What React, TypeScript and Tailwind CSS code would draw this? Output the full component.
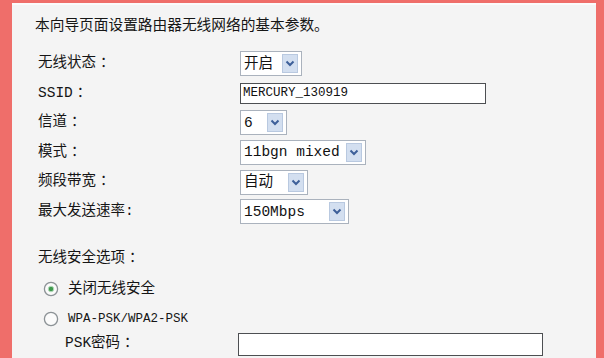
import React from "react";

const FONT = "font-['Liberation_Mono','Noto_Sans_CJK_SC',monospace]";

function Chevron() {
  return (
    <span className="flex h-[19px] w-[16px] items-center justify-center border border-[#b9c9e0] bg-[#d3dff0]">
      <svg width="10" height="7" viewBox="0 0 10 7">
        <path d="M1.5 1.5 L5 5 L8.5 1.5" fill="none" stroke="#3d5f99" strokeWidth="2" />
      </svg>
    </span>
  );
}

function Select({ value, width }: { value: string; width: string }) {
  return (
    <div
      className={`flex h-[25px] items-center justify-between border border-[#aab2bd] bg-white pl-[3px] pr-[3px] ${width}`}
    >
      <span className="text-[14.5px] leading-none text-[#111]">{value}</span>
      <Chevron />
    </div>
  );
}

function Radio({ checked }: { checked?: boolean }) {
  return (
    <svg width="16" height="16" viewBox="0 0 16 16">
      <circle cx="8" cy="8" r="6.6" fill="#fbfbfb" stroke="#8c9296" strokeWidth="1.3" />
      {checked && <circle cx="8" cy="8" r="2.8" fill="#3f9a4e" stroke="#b9dcbf" strokeWidth="1" />}
    </svg>
  );
}

function Label({ text, colon = "：" }: { text: string; colon?: string }) {
  return (
    <span className="text-[14.5px]">
      {text}
      <span className="pl-[4px]">{colon}</span>
    </span>
  );
}

const rows: { key: string; label: React.ReactNode; control: React.ReactNode }[] = [
  { key: "state", label: <Label text="无线状态" />, control: <Select value="开启" width="w-[62px]" /> },
  {
    key: "ssid",
    label: <Label text="SSID" />,
    control: (
      <div className="flex h-[21px] w-[246px] items-center border border-[#4d4f52] bg-white pl-[2px] text-[12.5px] text-[#111]">
        MERCURY_130919
      </div>
    ),
  },
  { key: "channel", label: <Label text="信道" />, control: <Select value="6" width="w-[47px]" /> },
  { key: "mode", label: <Label text="模式" />, control: <Select value="11bgn mixed" width="w-[126px]" /> },
  { key: "band", label: <Label text="频段带宽" />, control: <Select value="自动" width="w-[68px]" /> },
  {
    key: "rate",
    label: <span className="text-[14.5px]">最大发送速率:</span>,
    control: <Select value="150Mbps" width="w-[109px]" />,
  },
];

export default function App() {
  return (
    <div className={`h-[358px] w-[604px] overflow-hidden bg-[#ef6e6a] pl-[12px] pr-[8px] pt-[3px] ${FONT}`}>
      <div className="h-full border-t-2 border-[#fbfbfb] bg-[#f4f4f4] text-[#161616]">
        <p className="pl-[23px] pt-[12px] text-[14.7px] leading-[18px]">本向导页面设置路由器无线网络的基本参数。</p>
        <div className="mt-[14px] flex flex-col pl-[26px]">
          {rows.map((r) => (
            <div key={r.key} className="grid h-[29.6px] grid-cols-[202px_1fr] items-center">
              {r.label}
              <div>{r.control}</div>
            </div>
          ))}
        </div>
        <p className="mt-[22px] pl-[26px] text-[14.5px] leading-[18px]">
          无线安全选项<span className="pl-[4px]">：</span>
        </p>
        <div className="mt-[13px] flex items-center gap-[9px] pl-[31px]">
          <Radio checked />
          <span className="text-[14.5px] leading-[18px]">关闭无线安全</span>
        </div>
        <div className="mt-[12px] flex items-center gap-[9px] pl-[31px]">
          <Radio />
          <span className="text-[12.5px] leading-[18px]">WPA-PSK/WPA2-PSK</span>
        </div>
        <div className="mt-[5px] grid grid-cols-[173px_1fr] items-center pl-[53px]">
          <Label text="PSK密码" />
          <div className="h-[23px] w-[305px] border border-[#4d4f52] bg-white" />
        </div>
      </div>
    </div>
  );
}
